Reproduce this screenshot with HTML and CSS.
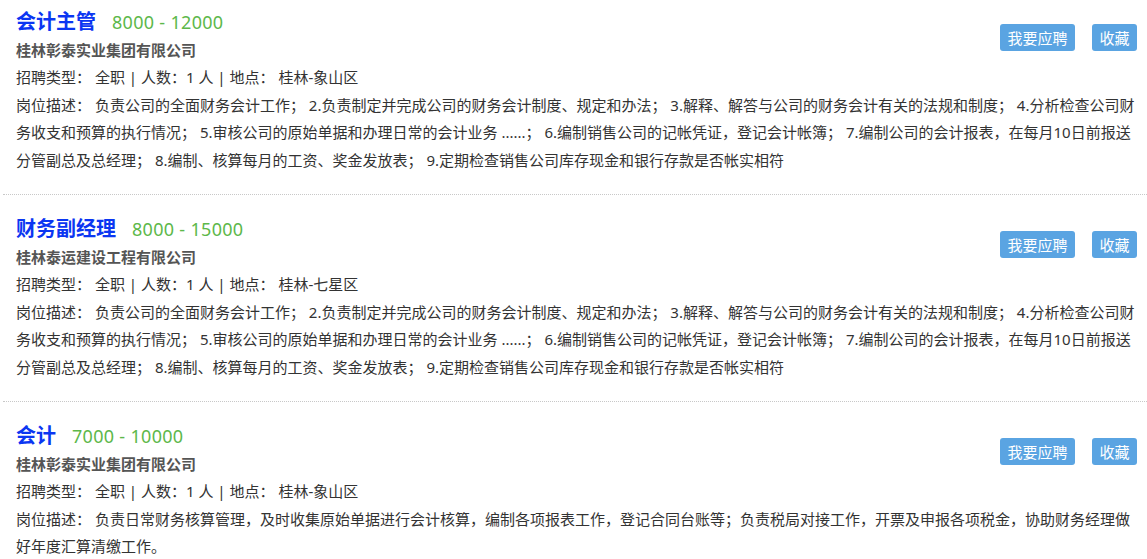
FILE: index.html
```html
<!DOCTYPE html>
<html lang="zh-CN">
<head>
  <meta charset="UTF-8">
  <title>职位列表</title>
  <meta name="viewport" content="width=device-width, initial-scale=1.0">
  <link rel="stylesheet" href="styles.css">
</head>
<body>
  <ul class="job-list">
    <li class="job">
      <div class="job-head">
        <div class="job-main">
          <h3><a href="#">会计主管</a><span class="salary">8000 - 12000</span></h3>
          <p class="company">桂林彰泰实业集团有限公司</p>
        </div>
        <div class="actions">
          <button>我要应聘</button>
          <button>收藏</button>
        </div>
      </div>
      <p class="info">招聘类型： 全职 | 人数：1 人 | 地点： 桂林-象山区</p>
      <p class="desc">岗位描述： 负责公司的全面财务会计工作； 2.负责制定并完成公司的财务会计制度、规定和办法； 3.解释、解答与公司的财务会计有关的法规和制度； 4.分析检查公司财务收支和预算的执行情况； 5.审核公司的原始单据和办理日常的会计业务 ......； 6.编制销售公司的记帐凭证，登记会计帐簿； 7.编制公司的会计报表，在每月10日前报送分管副总及总经理； 8.编制、核算每月的工资、奖金发放表； 9.定期检查销售公司库存现金和银行存款是否帐实相符</p>
    </li>
    <li class="job">
      <div class="job-head">
        <div class="job-main">
          <h3><a href="#">财务副经理</a><span class="salary">8000 - 15000</span></h3>
          <p class="company">桂林泰运建设工程有限公司</p>
        </div>
        <div class="actions">
          <button>我要应聘</button>
          <button>收藏</button>
        </div>
      </div>
      <p class="info">招聘类型： 全职 | 人数：1 人 | 地点： 桂林-七星区</p>
      <p class="desc">岗位描述： 负责公司的全面财务会计工作； 2.负责制定并完成公司的财务会计制度、规定和办法； 3.解释、解答与公司的财务会计有关的法规和制度； 4.分析检查公司财务收支和预算的执行情况； 5.审核公司的原始单据和办理日常的会计业务 ......； 6.编制销售公司的记帐凭证，登记会计帐簿； 7.编制公司的会计报表，在每月10日前报送分管副总及总经理； 8.编制、核算每月的工资、奖金发放表； 9.定期检查销售公司库存现金和银行存款是否帐实相符</p>
    </li>
    <li class="job">
      <div class="job-head">
        <div class="job-main">
          <h3><a href="#">会计</a><span class="salary">7000 - 10000</span></h3>
          <p class="company">桂林彰泰实业集团有限公司</p>
        </div>
        <div class="actions">
          <button>我要应聘</button>
          <button>收藏</button>
        </div>
      </div>
      <p class="info">招聘类型： 全职 | 人数：1 人 | 地点： 桂林-象山区</p>
      <p class="desc">岗位描述： 负责日常财务核算管理，及时收集原始单据进行会计核算，编制各项报表工作，登记合同台账等；负责税局对接工作，开票及申报各项税金，协助财务经理做好年度汇算清缴工作。</p>
    </li>
  </ul>
</body>
</html>
```

FILE: styles.css
```css
body {
  margin: 0;
  font-family: "Noto Sans", "Noto Sans CJK SC", sans-serif;
  font-size: 15px;
  color: #333;
  background: #fff;
}
.job-list {
  list-style: none;
  margin: -12px 0 0 3px;
  padding: 0;
}
.job {
  padding: 20px 10px 20px 13px;
  border-bottom: 1px dotted #c8c8c8;
  line-height: 27.5px;
}
.job p {
  margin: 0;
}
.job-head {
  display: flex;
  justify-content: space-between;
  align-items: center;
}
.job h3 {
  margin: 0;
  font-size: 20px;
  line-height: 27.5px;
}
.job h3 a {
  color: #0b36f2;
  text-decoration: none;
}
.salary {
  margin-left: 16px;
  font-size: 18px;
  font-weight: normal;
  letter-spacing: 0.3px;
  color: #5db84a;
}
.company {
  font-weight: bold;
  color: #555;
}
.actions {
  display: flex;
  gap: 17px;
  margin-top: 2px;
}
.actions button {
  height: 27px;
  padding: 0 7.5px;
  border: none;
  border-radius: 3px;
  background: #5aa4e2;
  color: #fff;
  font-family: inherit;
  font-size: 15px;
  cursor: pointer;
}
```
